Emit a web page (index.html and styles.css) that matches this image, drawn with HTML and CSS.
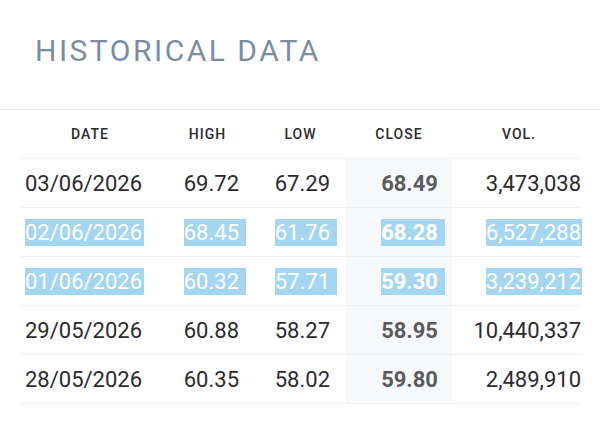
FILE: index.html
```html
<!DOCTYPE html>
<html>
<head>
<meta charset="utf-8">
<link rel="stylesheet" href="styles.css">
</head>
<body>
<div class="panel">
  <div class="title-bar"><h1 class="title">HISTORICAL DATA</h1></div>
  <div class="table">
    <div class="row head">
      <div class="c date">DATE</div>
      <div class="c high">HIGH</div>
      <div class="c low">LOW</div>
      <div class="c close">CLOSE</div>
      <div class="c vol">VOL.</div>
    </div>
    <div class="row">
      <div class="c date">03/06/2026</div>
      <div class="c high">69.72</div>
      <div class="c low">67.29</div>
      <div class="c close">68.49</div>
      <div class="c vol">3,473,038</div>
    </div>
    <div class="row">
      <div class="c date"><span class="sel">02/06/2026</span></div>
      <div class="c high"><span class="sel">68.45</span></div>
      <div class="c low"><span class="sel">61.76</span></div>
      <div class="c close"><span class="sel">68.28</span></div>
      <div class="c vol"><span class="sel">6,527,288</span></div>
    </div>
    <div class="row">
      <div class="c date"><span class="sel">01/06/2026</span></div>
      <div class="c high"><span class="sel">60.32</span></div>
      <div class="c low"><span class="sel">57.71</span></div>
      <div class="c close"><span class="sel">59.30</span></div>
      <div class="c vol"><span class="sel">3,239,212</span></div>
    </div>
    <div class="row">
      <div class="c date">29/05/2026</div>
      <div class="c high">60.88</div>
      <div class="c low">58.27</div>
      <div class="c close">58.95</div>
      <div class="c vol">10,440,337</div>
    </div>
    <div class="row">
      <div class="c date">28/05/2026</div>
      <div class="c high">60.35</div>
      <div class="c low">58.02</div>
      <div class="c close">59.80</div>
      <div class="c vol">2,489,910</div>
    </div>
  </div>
</div>
</body>
</html>
```
FILE: styles.css
```css
html, body {
  margin: 0;
  background: #ffffff;
}
body {
  font-family: Roboto, "Liberation Sans", sans-serif;
  color: #2b2b2e;
}
.title-bar {
  padding: 33px 0 40px 35px;
  border-bottom: 1px solid #e6e7e9;
}
.title {
  margin: 0;
  font-size: 30px;
  line-height: 36px;
  font-weight: 400;
  letter-spacing: 2.5px;
  color: #7a8da4;
}
.table {
  margin: 0 18px 0 20px;
}
.row {
  display: grid;
  grid-template-columns: 140px 95px 91px 106px 130px;
  height: 48px;
  border-bottom: 1px solid #f0f1f2;
}
.c {
  font-size: 22px;
  line-height: 46px;
  padding-top: 2px;
  white-space: nowrap;
}
.head .c {
  font-size: 14px;
  line-height: 48px;
  padding: 0;
  letter-spacing: 1px;
  text-align: center;
  color: #2b2b2e;
}
.date { padding-left: 5px; }
.high { text-align: right; padding-right: 16px; }
.low { text-align: right; padding-right: 16px; }
.close { text-align: right; padding-right: 14px; font-weight: 700; color: #5b5b5e; }
.vol { text-align: right; padding-right: 1px; }
.row:not(.head) .close { background: #f7f8fa; }
.head .date, .head .high, .head .low, .head .close, .head .vol {
  padding: 0;
  font-weight: 500;
  color: #2b2b2e;
}
.head .vol { padding-left: 4px; }
.sel {
  background: #a5d6f1;
  color: #ffffff;
  padding: 1px 7px 1px 0;
  margin-right: -7px;
}
.date .sel { padding-right: 2px; margin-right: -2px; }
.vol .sel { padding-right: 1px; margin-right: -1px; }
```
